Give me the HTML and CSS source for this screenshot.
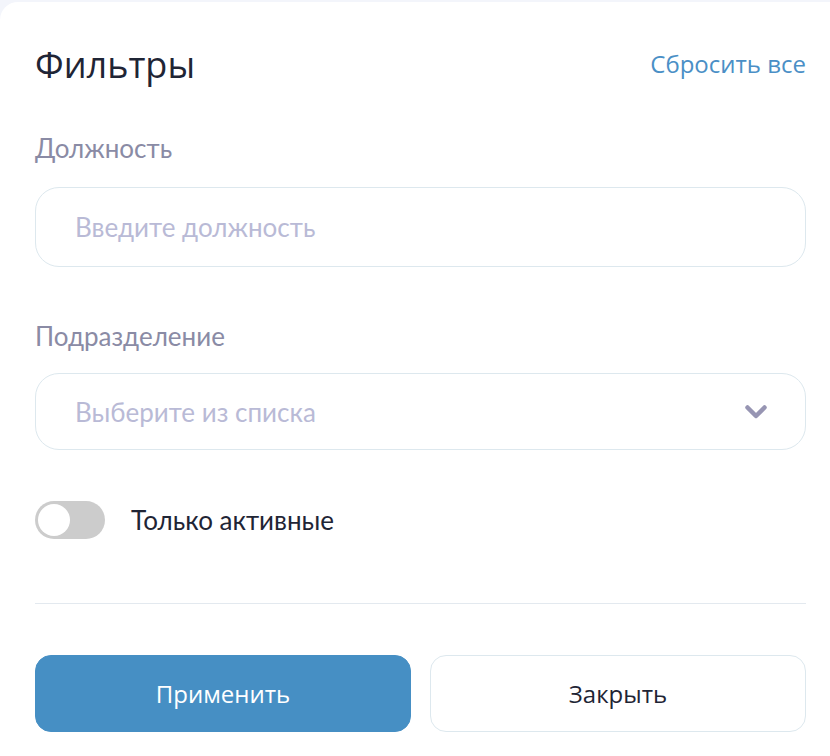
FILE: index.html
```html
<!DOCTYPE html>
<html lang="ru">
<head>
    <meta charset="UTF-8">
    <title>Фильтры</title>
    <link rel="stylesheet" href="styles.css">
</head>
<body>
    <div class="filter-panel">
        <div class="panel-header">
            <h1>Фильтры</h1>
            <a href="#" class="reset-link">Сбросить все</a>
        </div>

        <div class="field">
            <label for="position">Должность</label>
            <input id="position" class="text-input" type="text" placeholder="Введите должность">
        </div>

        <div class="field field-last">
            <label>Подразделение</label>
            <div class="select-box">
                <span class="select-placeholder">Выберите из списка</span>
                <svg class="chevron" width="24" height="16" viewBox="0 0 24 16">
                    <path d="M3.5 3.5 L12 12 L20.5 3.5" fill="none" stroke="#9795b3" stroke-width="4.5" stroke-linecap="round" stroke-linejoin="round"/>
                </svg>
            </div>
        </div>

        <div class="toggle-row">
            <div class="toggle"><span class="toggle-knob"></span></div>
            <span class="toggle-label">Только активные</span>
        </div>

        <hr class="divider">

        <div class="actions">
            <button class="btn btn-primary">Применить</button>
            <button class="btn btn-secondary">Закрыть</button>
        </div>
    </div>
</body>
</html>
```

FILE: styles.css
```css
body {
    margin: 0;
    padding: 2px 0 0 0;
    background-color: #f3f5fb;
    font-family: 'Lato', 'Noto Sans', sans-serif;
}

.filter-panel {
    background-color: #ffffff;
    border-top-left-radius: 18px;
    padding: 41px 24px 30px 35px;
    min-height: 700px;
}

.panel-header {
    display: flex;
    justify-content: space-between;
    align-items: center;
    margin-bottom: 46px;
}

.panel-header h1 {
    margin: 0;
    font-family: 'Open Sans', sans-serif;
    font-weight: 400;
    font-size: 36px;
    line-height: 44px;
    color: #1f2535;
}

.reset-link {
    font-family: 'Open Sans', sans-serif;
    font-size: 24px;
    color: #4a8fc6;
    text-decoration: none;
    margin-bottom: 4px;
}

.field {
    display: flex;
    flex-direction: column;
    margin-bottom: 54px;
}

.field label {
    font-size: 26px;
    line-height: 30px;
    color: #8a8ba5;
    margin-bottom: 24px;
}

.field-last {
    margin-bottom: 51px;
}

.field-last label {
    margin-bottom: 22px;
}

.text-input {
    box-sizing: border-box;
    height: 80px;
    padding: 0 39px;
    border: 1px solid #dde8ee;
    border-radius: 24px;
    font-family: 'Lato', sans-serif;
    font-size: 26px;
    color: #1f2535;
    outline: none;
}

.text-input::placeholder {
    color: #b9bad6;
}

.select-box {
    box-sizing: border-box;
    height: 77px;
    padding: 0 37px 0 39px;
    border: 1px solid #dde8ee;
    border-radius: 24px;
    display: flex;
    align-items: center;
    justify-content: space-between;
}

.select-placeholder {
    font-size: 26px;
    color: #b9bad6;
}

.toggle-row {
    display: flex;
    align-items: center;
    gap: 26px;
}

.toggle {
    width: 70px;
    height: 38px;
    border-radius: 19px;
    background-color: #cccccc;
    display: flex;
    align-items: center;
    padding: 0 3px;
    box-sizing: border-box;
}

.toggle-knob {
    width: 32px;
    height: 32px;
    border-radius: 50%;
    background-color: #ffffff;
}

.toggle-label {
    font-size: 26px;
    color: #1f2535;
}

.divider {
    border: none;
    border-top: 1px solid #e3e9ef;
    margin: 64px 0 51px 0;
}

.actions {
    display: flex;
    gap: 19px;
}

.btn {
    flex: 1;
    height: 77px;
    border-radius: 16px;
    font-family: 'Open Sans', sans-serif;
    font-size: 24px;
    cursor: pointer;
}

.btn-primary {
    background-color: #468fc4;
    border: 1px solid #468fc4;
    color: #ffffff;
}

.btn-secondary {
    background-color: #ffffff;
    border: 1px solid #dde8ee;
    color: #1f2535;
}
```
